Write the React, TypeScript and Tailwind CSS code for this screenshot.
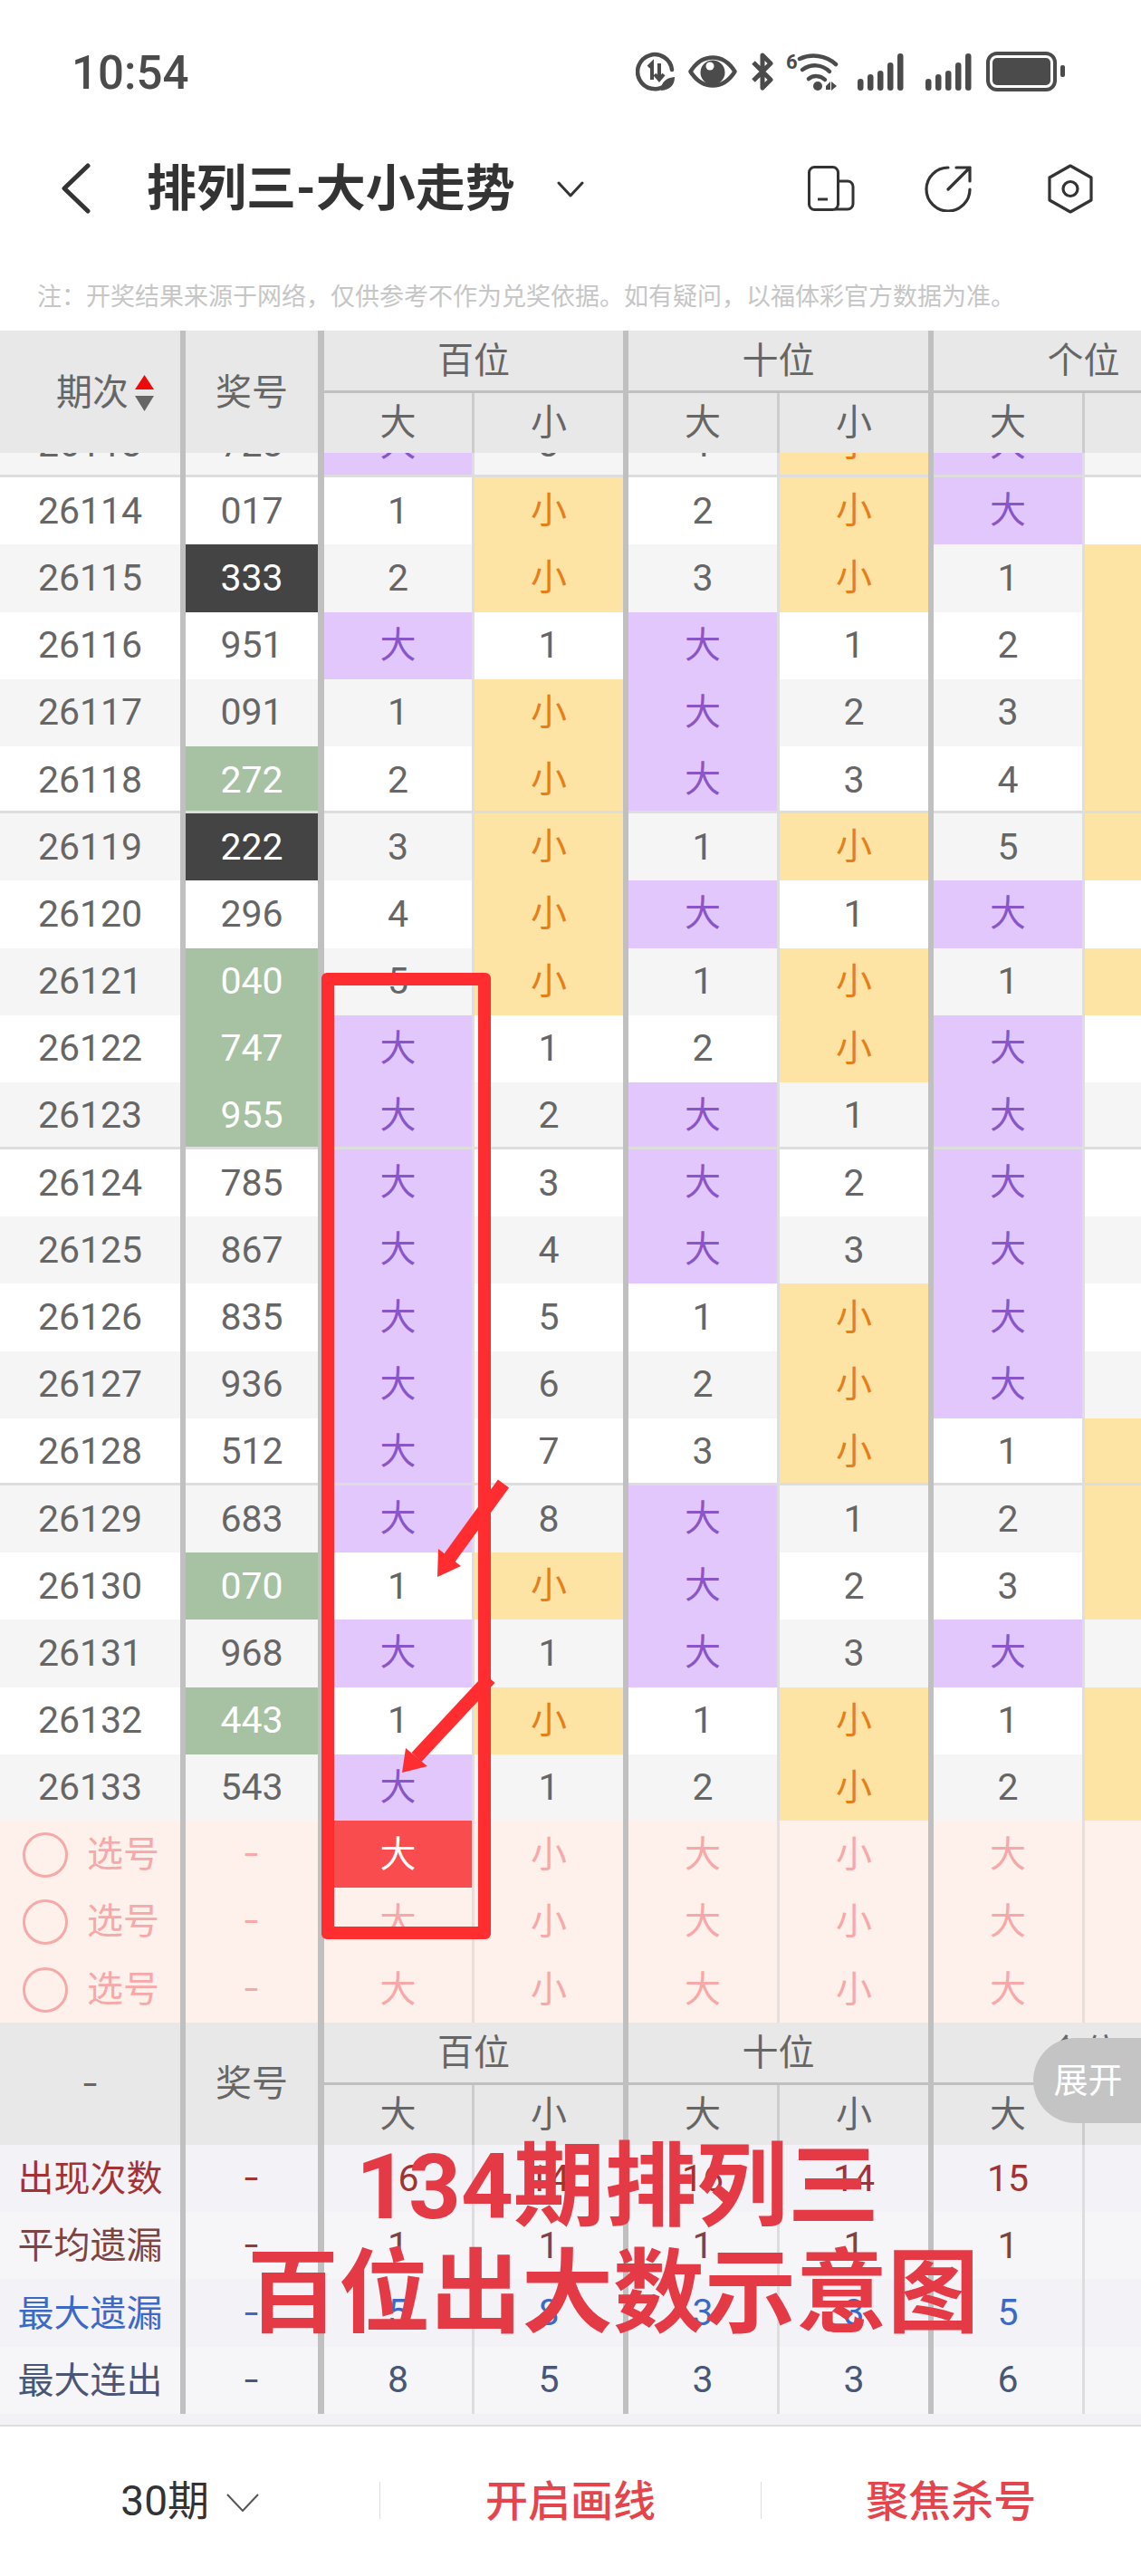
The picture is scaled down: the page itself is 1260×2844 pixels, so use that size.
// App.tsx — 排列三 大小走势 trend table with the red hand-drawn annotations on top
import type { ReactNode } from "react";

const CELL_W = ["w-[163px]", "w-[164px]", "w-[164px]", "w-[164px]", "w-[164px]", "w-[164px]"];

// period, prize number, then one char per column: B = 大, S = 小, digit = miss count
const ROWS: [string, string, string][] = [
  ["26113", "728", "B31SB1"],
  ["26114", "017", "1S2SB2"],
  ["26115", "333", "2S3S1S"],
  ["26116", "951", "B1B12S"],
  ["26117", "091", "1SB23S"],
  ["26118", "272", "2SB34S"],
  ["26119", "222", "3S1S5S"],
  ["26120", "296", "4SB1B1"],
  ["26121", "040", "5S1S1S"],
  ["26122", "747", "B12SB1"],
  ["26123", "955", "B2B1B2"],
  ["26124", "785", "B3B2B3"],
  ["26125", "867", "B4B3B4"],
  ["26126", "835", "B51SB5"],
  ["26127", "936", "B62SB6"],
  ["26128", "512", "B73S1S"],
  ["26129", "683", "B8B12S"],
  ["26130", "070", "1SB23S"],
  ["26131", "968", "B1B3B1"],
  ["26132", "443", "1S1S1S"],
  ["26133", "543", "B12S2S"],
];

const DARK_NUMS = ["333", "222"];
const GREEN_NUMS = ["272", "040", "747", "955", "070", "443"];

const STATS = [
  { label: "出现次数", text: "text-[#a33234]", bg: "bg-[#f2f2f7]", values: ["16", "14", "16", "14", "15", ""] },
  { label: "平均遗漏", text: "text-[#7d4444]", bg: "bg-[#f6f6f8]", values: ["1", "1", "1", "1", "1", ""] },
  { label: "最大遗漏", text: "text-[#3d69c6]", bg: "bg-[#f2f2f7]", values: ["5", "8", "3", "3", "5", ""] },
  { label: "最大连出", text: "text-[#4a5675]", bg: "bg-[#f6f6f8]", values: ["8", "5", "3", "3", "6", ""] },
];

// full-width colon and commas written as escapes
const NOTE = "注\uFF1A开奖结果来源于网络\uFF0C仅供参考不作为兑奖依据。如有疑问\uFF0C以福体彩官方数据为准。";

// the app's dash is wider than Roboto's hyphen
function Dash() {
  return <span className="inline-block scale-x-[1.4]">-</span>;
}

function Row({
  first,
  second,
  cells,
  height,
  thinSep,
  className = "",
}: {
  first: ReactNode;
  second: ReactNode;
  cells: ReactNode[];
  height: string;
  thinSep: string;
  className?: string;
}) {
  return (
    <div className={`flex w-[1363px] shrink-0 ${height} ${className}`}>
      {first}
      <div className="h-full w-[6px] shrink-0 bg-[#c0c0c0]" />
      {second}
      <div className="h-full w-[7px] shrink-0 bg-[#c0c0c0]" />
      {cells[0]}
      <div className={`h-full w-[3px] shrink-0 ${thinSep}`} />
      {cells[1]}
      <div className="h-full w-[6px] shrink-0 bg-[#c0c0c0]" />
      {cells[2]}
      <div className={`h-full w-[3px] shrink-0 ${thinSep}`} />
      {cells[3]}
      <div className="h-full w-[6px] shrink-0 bg-[#c0c0c0]" />
      {cells[4]}
      <div className={`h-full w-[3px] shrink-0 ${thinSep}`} />
      {cells[5]}
    </div>
  );
}

function TableHeader({ first }: { first: ReactNode }) {
  const groups = [
    { name: "百位", w: "w-[330px]", a: "w-[163px]" },
    { name: "十位", w: "w-[331px]", a: "w-[164px]" },
    { name: "个位", w: "w-[331px]", a: "w-[164px]" },
  ];
  return (
    <div className="flex h-[135px] w-[1363px] shrink-0 bg-[#e8e8e8] text-[#666]">
      <div className="flex h-full w-[199px] shrink-0 items-center pt-[2px]">{first}</div>
      <div className="h-full w-[6px] shrink-0 bg-[#c0c0c0]" />
      <div className="flex h-full w-[146px] shrink-0 items-center justify-center pt-[2px]">奖号</div>
      {groups.map((g, i) => (
        <div key={g.name} className="flex h-full shrink-0">
          <div className={`h-full shrink-0 bg-[#c0c0c0] ${i === 0 ? "w-[7px]" : "w-[6px]"}`} />
          <div className={`flex h-full shrink-0 flex-col ${g.w}`}>
            <div className="flex h-[66px] items-center justify-center pt-[2px]">{g.name}</div>
            <div className="h-[3px] bg-[#c0c0c0]" />
            <div className="flex h-[66px]">
              <div className={`flex h-full shrink-0 items-center justify-center ${g.a}`}>大</div>
              <div className="h-full w-[3px] shrink-0 bg-[#cccccc]" />
              <div className="flex h-full w-[164px] shrink-0 items-center justify-center">小</div>
            </div>
          </div>
        </div>
      ))}
    </div>
  );
}

function SortIcon() {
  return (
    <svg width="21" height="40" viewBox="0 0 21 40" className="ml-[7px] shrink-0">
      <path d="M10.5 0 L21 16 H0 Z" fill="#ee0a0a" />
      <path d="M0 23 H21 L10.5 40 Z" fill="#666" />
    </svg>
  );
}

function Signal({ className }: { className: string }) {
  const bars = [13, 18, 22, 31, 41];
  return (
    <svg width="51" height="42" viewBox="0 0 51 42" className={className} fill="currentColor">
      {bars.map((h, i) => (
        <rect key={i} x={i * 11} y={42 - h} width="6.5" height={h} rx="3.25" />
      ))}
    </svg>
  );
}

function StatusIcons() {
  return (
    <div className="flex items-center text-[#4b4b4b]">
      {/* data saver clock */}
      <svg width="44" height="44" viewBox="0 0 44 44" fill="none" stroke="currentColor" strokeWidth="4.5">
        <path d="M33 37 A19 19 0 1 1 40 20" strokeLinecap="round" />
        <path d="M14 17 L18 13 V31" strokeWidth="4" />
        <path d="M26 13 V30 M21 25 L26 31 L31 25" strokeWidth="4" />
        <path d="M28 43 C28 33 34 29 43 28 C43 37 38 42 28 43 Z" fill="currentColor" stroke="none" />
      </svg>
      {/* eye comfort */}
      <svg width="54" height="36" viewBox="0 0 54 36" fill="none" className="ml-[14px]">
        <path d="M2.5 18 C10 6 18 2.5 27 2.5 C36 2.5 44 6 51.5 18 C44 30 36 33.5 27 33.5 C18 33.5 10 30 2.5 18 Z" stroke="currentColor" strokeWidth="4.5" strokeLinejoin="round" />
        <circle cx="27" cy="19" r="13.5" fill="currentColor" />
        <circle cx="24" cy="12" r="4.5" fill="#fff" />
      </svg>
      {/* bluetooth */}
      <svg width="24" height="42" viewBox="0 0 24 42" fill="none" className="ml-[16px]" stroke="currentColor" strokeWidth="5" strokeLinejoin="round">
        <path d="M2 11 L21 30 L12 39 V3 L21 12 L2 31" />
      </svg>
      {/* wifi 6 */}
      <div className="relative ml-[14px] h-[44px] w-[58px]">
        <span className="absolute left-0 top-[-3px] text-[22px] font-bold leading-[30px]">6</span>
        <svg width="58" height="44" viewBox="0 0 58 44" fill="none" stroke="currentColor" strokeWidth="4.5" strokeLinecap="round" className="absolute left-0 top-0">
          <path d="M15 8 C28 2 44 4 55 14" />
          <path d="M18 20 C28 13 40 14 48 22" />
          <path d="M25 30 C30 26 38 26 43 31" />
          <circle cx="35" cy="38" r="5" fill="currentColor" stroke="none" />
          <path d="M44 38 L49 33 V42 H44 Z M50 33 L56 38 L50 43 Z" fill="currentColor" stroke="none" />
        </svg>
      </div>
      <Signal className="ml-[21px]" />
      <Signal className="ml-[24px]" />
      {/* battery */}
      <svg width="87" height="44" viewBox="0 0 87 44" fill="none" className="ml-[16px]">
        <rect x="2" y="2" width="74" height="40" rx="10" stroke="currentColor" strokeWidth="4" />
        <rect x="7" y="7" width="64" height="30" rx="5" fill="currentColor" />
        <rect x="82" y="15" width="5" height="13" rx="2" fill="currentColor" />
      </svg>
    </div>
  );
}

export default function App() {
  return (
    <div className="relative h-[2844px] w-[1260px] overflow-hidden bg-white font-[Roboto,'Noto_Sans_CJK_SC',sans-serif] text-[40px] leading-none">
      {/* status bar */}
      <div className="flex h-[158px] items-center justify-between pl-[79px] pr-[84px]">
        <span className="pt-[2px] text-[51px] font-medium text-[#4b4b4b]">10:54</span>
        <StatusIcons />
      </div>

      {/* title bar */}
      <div className="flex h-[100px] items-center pl-[68px] pr-[53px] text-[#333]">
        <svg width="32" height="56" viewBox="0 0 32 56" fill="none" stroke="currentColor" strokeWidth="5" strokeLinecap="round" strokeLinejoin="round">
          <path d="M29 3 L3 28 L29 53" />
        </svg>
        <span className="ml-[62px] text-[55px] font-bold">排列三-大小走势</span>
        <svg width="30" height="18" viewBox="0 0 30 18" fill="none" stroke="currentColor" strokeWidth="3" strokeLinecap="round" strokeLinejoin="round" className="ml-[46px] mt-[2px]">
          <path d="M2 2 L15 16 L28 2" />
        </svg>
        <div className="ml-auto flex items-center">
          <svg width="52" height="50" viewBox="0 0 52 50" fill="none" stroke="currentColor" strokeWidth="3">
            <rect x="1.5" y="1.5" width="32" height="47" rx="6" />
            <path d="M33 17 H44 A6 6 0 0 1 50 23 V42 A6 6 0 0 1 44 48 H30" />
            <path d="M11 37 H22" />
          </svg>
          <svg width="52" height="52" viewBox="0 0 52 52" fill="none" stroke="currentColor" strokeWidth="3.2" strokeLinecap="round" strokeLinejoin="round" className="ml-[77px]">
            <path d="M26 3 A24 24 0 1 0 50 27" />
            <path d="M35 3 H50 V18 M50 3 L26 27" />
          </svg>
          <svg width="50" height="55" viewBox="0 0 50 55" fill="none" stroke="currentColor" strokeWidth="3.2" strokeLinejoin="round" className="ml-[84px]">
            <path d="M25 2 L48 15 V40 L25 53 L2 40 V15 Z" />
            <circle cx="25" cy="27.5" r="8" />
          </svg>
        </div>
      </div>

      {/* disclaimer */}
      <div className="h-[107px] whitespace-nowrap pl-[41px] pt-[50px] text-[27px] leading-[40px] text-[#c6c6c6]">{NOTE}</div>

      <TableHeader
        first={
          <div className="flex items-center pl-[62px]">
            期次
            <SortIcon />
          </div>
        }
      />

      {/* scrolled body: first row is cut by the sticky header */}
      <div className="h-[1510px] overflow-hidden">
        <div className="-mt-[47px] flex flex-col">
          {ROWS.map(([period, num, cells], i) => {
            const divider = i % 5 === 0 && i < 20 ? "border-b-[3px] border-[#dddddd] pt-[3px]" : "";
            const bg = i % 2 === 0 ? "bg-[#f5f5f5]" : "bg-white";
            const numStyle = DARK_NUMS.includes(num)
              ? "bg-[#444444] text-white"
              : GREEN_NUMS.includes(num)
                ? "bg-[#a7c2a2] text-white"
                : "text-[#666]";
            return (
              <Row
                key={period}
                height="h-[74.2px]"
                thinSep="bg-[#dedede]"
                className={bg}
                first={
                  <div className={`flex h-full w-[199px] shrink-0 items-center justify-center text-[41px] text-[#666] ${divider}`}>{period}</div>
                }
                second={
                  <div className={`flex h-full w-[146px] shrink-0 items-center justify-center text-[41px] ${numStyle} ${divider}`}>{num}</div>
                }
                cells={cells.split("").map((c, j) => {
                  const style =
                    c === "B"
                      ? "bg-[#e1c7fc] text-[#8a55c8]"
                      : c === "S"
                        ? "bg-[#fee4a4] text-[#e67e1a]"
                        : "text-[41px] text-[#666]";
                  return (
                    <div key={j} className={`flex h-full shrink-0 items-center justify-center ${CELL_W[j]} ${style} ${divider}`}>
                      {c === "B" ? "大" : c === "S" ? "小" : c}
                    </div>
                  );
                })}
              />
            );
          })}
        </div>
      </div>

      {/* pick rows */}
      {[0, 1, 2].map((r) => (
        <Row
          key={r}
          height="h-[74.33px]"
          thinSep="bg-[#e6dfdc]"
          className="bg-[#fef0ea] text-[#f7a8a8]"
          first={
            <div className="flex h-full w-[199px] shrink-0 items-center gap-[21px] pl-[25px] pt-[2px]">
              <div className="h-[50px] w-[50px] shrink-0 rounded-full border-[3px] border-[#f6a9a9]" />
              选号
            </div>
          }
          second={
            <div className="flex h-full w-[146px] shrink-0 items-center justify-center">
              <Dash />
            </div>
          }
          cells={["大", "小", "大", "小", "大", "小"].map((t, j) => (
            <div
              key={j}
              className={`flex h-full shrink-0 items-center justify-center pt-[2px] ${CELL_W[j]} ${r === 0 && j === 0 ? "bg-[#f94c4e] text-white" : ""}`}
            >
              {t}
            </div>
          ))}
        />
      ))}

      <TableHeader
        first={
          <div className="w-full text-center">
            <Dash />
          </div>
        }
      />

      {/* stats */}
      {STATS.map((s) => (
        <Row
          key={s.label}
          height="h-[74.25px]"
          thinSep="bg-[#dddddd]"
          className={`${s.bg} ${s.text}`}
          first={<div className="flex h-full w-[199px] shrink-0 items-center justify-center pt-[2px]">{s.label}</div>}
          second={
            <div className="flex h-full w-[146px] shrink-0 items-center justify-center">
              <Dash />
            </div>
          }
          cells={s.values.map((v, j) => (
            <div key={j} className={`flex h-full shrink-0 items-center justify-center text-[41px] ${CELL_W[j]}`}>
              {v}
            </div>
          ))}
        />
      ))}
      <div className="h-[14px] border-b-2 border-[#dddddd] bg-[#f2f2f6]" />

      {/* footer */}
      <div className="flex h-[165px] items-center text-[46px]">
        <div className="flex flex-1 items-center justify-center text-[#333]">
          30期
          <svg width="36" height="20" viewBox="0 0 36 20" fill="none" stroke="#555" strokeWidth="2" className="ml-[19px] mt-[4px]">
            <path d="M1 1 L18 19 L35 1" />
          </svg>
        </div>
        <div className="mb-[2px] h-[41px] w-px bg-[#dddddd]" />
        <div className="flex-1 text-center text-[47px] font-medium text-[#e4454d]">开启画线</div>
        <div className="mb-[2px] h-[41px] w-px bg-[#dddddd]" />
        <div className="flex-1 text-center text-[47px] font-medium text-[#e4454d]">聚焦杀号</div>
      </div>

      {/* 展开 pill */}
      <div className="absolute left-[1141px] top-[2250px] flex h-[94px] w-[119px] items-center justify-center rounded-l-[47px] bg-[#c4c4c4] pl-[2px] text-[38px] text-white">
        展开
      </div>

      {/* red annotation frame and arrows */}
      <div className="absolute left-[355px] top-[1074px] h-[1067px] w-[187px] rounded-[6px] border-[14px] border-[#ff2d30]" />
      <svg width="1260" height="2844" viewBox="0 0 1260 2844" className="pointer-events-none absolute left-0 top-0" fill="none">
        <path d="M556 1638 L495 1722" stroke="#ff2d30" strokeWidth="15" />
        <path d="M483 1741 L484 1710 L509 1729 Z" fill="#ff2d30" />
        <path d="M541 1853 L460 1940" stroke="#ff2d30" strokeWidth="15" />
        <path d="M444 1957 L448 1930 L472 1950 Z" fill="#ff2d30" />
      </svg>

      {/* big caption over the table */}
      <div className="absolute left-[257px] top-[2356px] w-[840px] whitespace-nowrap text-center text-[101px] font-bold leading-[118px] text-[#e33a46]">
        <div className="pl-[10px]">134期排列三</div>
        <div>百位出大数示意图</div>
      </div>
    </div>
  );
}
